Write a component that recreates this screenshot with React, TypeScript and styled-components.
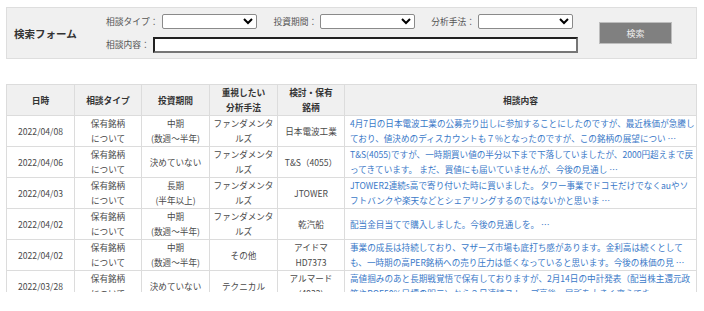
import React from 'react';
import styled, { createGlobalStyle } from 'styled-components';

const GlobalStyle = createGlobalStyle`
  html, body {
    margin: 0;
    padding: 0;
    background: #fff;
  }
  body {
    font-family: "Noto Sans CJK JP", "Noto Sans", sans-serif;
    color: #444;
  }
`;

const ScPage = styled.div`
  width: 691px;
  padding: 7px 0 0 6px;
`;

const ScPanel = styled.form`
  display: flex;
  align-items: center;
  height: 50px;
  background: #f0f0f0;
  border: 1px solid #dedede;
`;

const ScTitle = styled.div`
  width: 92px;
  padding-left: 7px;
  font-size: 10.5px;
  font-weight: bold;
  color: #333;
`;

const ScFields = styled.div`
  display: flex;
  flex-direction: column;
  gap: 8px;
  width: 472px;
`;

const ScFieldRow = styled.div`
  display: flex;
  align-items: center;
`;

const ScLabel = styled.label<{ $gap?: number }>`
  display: flex;
  align-items: center;
  margin-left: ${p => p.$gap ?? 0}px;
  font-size: 8.75px;
  line-height: 15px;
  color: #555;
  white-space: nowrap;
`;

const ScLabelText = styled.span`
  margin-right: 3px;
`;

const ScSelect = styled.select`
  width: 95px;
  height: 15px;
  padding: 0;
  font-size: 8px;
  border: 1px solid #8a8a8a;
  border-radius: 2px;
  background: #fff;
`;

const ScTextInput = styled.input`
  box-sizing: border-box;
  width: 425px;
  height: 16px;
  padding: 0;
  border: 2px inset #767676;
  background: #fff;
  font-size: 9px;
`;

const ScButton = styled.button`
  box-sizing: border-box;
  width: 73px;
  height: 22px;
  margin-left: 21px;
  background: #808080;
  border: 1px solid #bdbdbd;
  color: #eee;
  font-family: inherit;
  font-size: 9px;
  padding: 0;
`;

const ScTableWrap = styled.div`
  margin-top: 25px;
  height: 208px;
  overflow: hidden;
`;

const ScTable = styled.table`
  width: 691px;
  border-collapse: collapse;
  table-layout: fixed;
  border: 1px solid #dcdcdc;
  font-size: 8.6px;
  line-height: 15px;
`;

const ScTh = styled.th<{ $w?: number }>`
  width: ${p => (p.$w ? `${p.$w}px` : 'auto')};
  padding: 0;
  height: 30px;
  background: #f0f0f0;
  border: 1px solid #dcdcdc;
  font-size: 8.75px;
  font-weight: bold;
  color: #333;
  text-align: center;
  vertical-align: middle;
`;

const ScTd = styled.td`
  padding: 0;
  height: 30px;
  border: 1px solid #dcdcdc;
  color: #4a4a4a;
  text-align: center;
  vertical-align: middle;
`;

const ScBodyCell = styled(ScTd)`
  padding: 0 1px 0 5px;
  text-align: left;
  color: #3a79c8;
`;

type Row = {
  date: string;
  type: string;
  term: string;
  method: string;
  stock: string;
  body: string;
};

const rows: Row[] = [
  {
    date: '2022/04/08',
    type: '保有銘柄\nについて',
    term: '中期\n(数週～半年)',
    method: 'ファンダメンタ\nルズ',
    stock: '日本電波工業',
    body: '4月7日の日本電波工業の公募売り出しに参加することにしたのですが、最近株価が急騰しており、値決めのディスカウントも７%となったのですが、この銘柄の展望につい …'
  },
  {
    date: '2022/04/06',
    type: '保有銘柄\nについて',
    term: '決めていない',
    method: 'ファンダメンタ\nルズ',
    stock: 'T&S（4055）',
    body: 'T&S(4055)ですが、一時期買い値の半分以下まで下落していましたが、2000円超えまで戻ってきています。 まだ、買値にも届いていませんが、今後の見通し …'
  },
  {
    date: '2022/04/03',
    type: '保有銘柄\nについて',
    term: '長期\n(半年以上)',
    method: 'ファンダメンタ\nルズ',
    stock: 'JTOWER',
    body: 'JTOWER2連続s高で寄り付いた時に買いました。 タワー事業でドコモだけでなくauやソフトバンクや楽天などとシェアリングするのではないかと思いま …'
  },
  {
    date: '2022/04/02',
    type: '保有銘柄\nについて',
    term: '中期\n(数週～半年)',
    method: 'ファンダメンタ\nルズ',
    stock: '乾汽船',
    body: '配当金目当てで購入しました。今後の見通しを。 …'
  },
  {
    date: '2022/04/02',
    type: '保有銘柄\nについて',
    term: '中期\n(数週～半年)',
    method: 'その他',
    stock: 'アイドマ\nHD7373',
    body: '事業の成長は持続しており、マザーズ市場も底打ち感があります。金利高は続くとしても、一時期の高PER銘柄への売り圧力は低くなっていると思います。今後の株価の見 …'
  },
  {
    date: '2022/03/28',
    type: '保有銘柄\nについて',
    term: '決めていない',
    method: 'テクニカル',
    stock: 'アルマード\n(4932)',
    body: '高値掴みのあと長期戦覚悟で保有しておりますが、2月14日の中計発表（配当株主還元政策やROE50%目標の明示）から２日連続ストップ高後、居所を大きく変えてま …'
  }
];

function Lines({ text }: { text: string }): JSX.Element {
  const parts = text.split('\n');
  return <>
    {parts.map((p, i) => (
      <React.Fragment key={i}>
        {i > 0 && <br />}
        {p}
      </React.Fragment>
    ))}
  </>;
}

export default function App(): JSX.Element {
  return <>
    <GlobalStyle />
    <ScPage>
      <ScPanel onSubmit={e => e.preventDefault()}>
        <ScTitle>検索フォーム</ScTitle>
        <ScFields>
          <ScFieldRow>
            <ScLabel>
              <ScLabelText>相談タイプ：</ScLabelText>
              <ScSelect><option></option></ScSelect>
            </ScLabel>
            <ScLabel $gap={17}>
              <ScLabelText>投資期間：</ScLabelText>
              <ScSelect><option></option></ScSelect>
            </ScLabel>
            <ScLabel $gap={16}>
              <ScLabelText>分析手法：</ScLabelText>
              <ScSelect><option></option></ScSelect>
            </ScLabel>
          </ScFieldRow>
          <ScFieldRow>
            <ScLabel>
              <ScLabelText>相談内容：</ScLabelText>
              <ScTextInput type="text" />
            </ScLabel>
          </ScFieldRow>
        </ScFields>
        <ScButton type="submit">検索</ScButton>
      </ScPanel>

      <ScTableWrap>
        <ScTable>
          <thead>
            <tr>
              <ScTh $w={67}>日時</ScTh>
              <ScTh $w={66}>相談タイプ</ScTh>
              <ScTh $w={67}>投資期間</ScTh>
              <ScTh $w={67}>重視したい<br />分析手法</ScTh>
              <ScTh $w={66}>検討・保有<br />銘柄</ScTh>
              <ScTh>相談内容</ScTh>
            </tr>
          </thead>
          <tbody>
            {rows.map((r, i) => (
              <tr key={i}>
                <ScTd>{r.date}</ScTd>
                <ScTd><Lines text={r.type} /></ScTd>
                <ScTd><Lines text={r.term} /></ScTd>
                <ScTd><Lines text={r.method} /></ScTd>
                <ScTd><Lines text={r.stock} /></ScTd>
                <ScBodyCell>{r.body}</ScBodyCell>
              </tr>
            ))}
          </tbody>
        </ScTable>
      </ScTableWrap>
    </ScPage>
  </>;
}
